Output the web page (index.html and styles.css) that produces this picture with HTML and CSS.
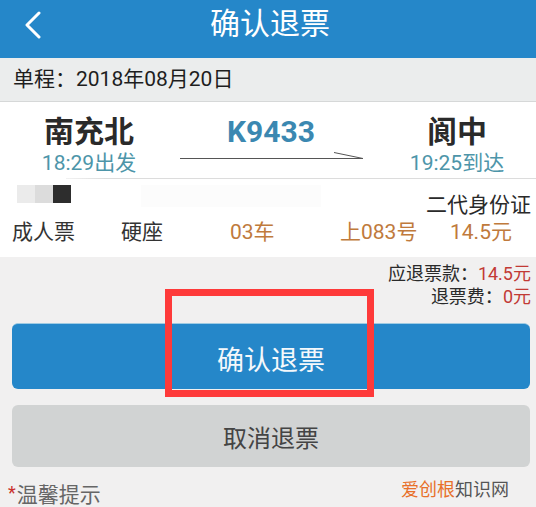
FILE: index.html
```html
<!DOCTYPE html>
<html lang="zh-CN">
<head>
  <meta charset="UTF-8">
  <meta name="viewport" content="width=device-width, initial-scale=1">
  <title>确认退票</title>
  <link rel="stylesheet" href="styles.css">
</head>
<body>
  <div class="page">
    <div class="top-bar">
      <div class="back">
        <svg width="20" height="30" viewBox="0 0 20 30">
          <polyline points="15,2 3,14 15,26" fill="none" stroke="#fff" stroke-width="3" stroke-linecap="round" stroke-linejoin="round"/>
        </svg>
      </div>
      <div class="top-title">确认退票</div>
      <div></div>
    </div>

    <div class="trip-date">单程：2018年08月20日</div>

    <div class="ticket">
      <div class="route">
        <div class="station">
          <div class="station-name">南充北</div>
          <div class="station-time">18:29出发</div>
        </div>
        <div class="train">
          <div class="train-no">K9433</div>
          <div class="train-arrow">
            <svg width="184" height="10" viewBox="0 0 184 10">
              <line x1="0" y1="8.5" x2="183" y2="8.5" stroke="#555" stroke-width="1"/>
              <line x1="154" y1="2.5" x2="183" y2="8.5" stroke="#555" stroke-width="1"/>
            </svg>
          </div>
        </div>
        <div class="station">
          <div class="station-name">阆中</div>
          <div class="station-time">19:25到达</div>
        </div>
      </div>
      <div class="route-line"></div>

      <div class="passenger">
        <div class="passenger-top">
          <div class="name-mask">
            <span class="mask-a"></span><span class="mask-b"></span><span class="mask-c"></span>
          </div>
          <div class="id-mask"></div>
          <div class="id-type">二代身份证</div>
        </div>
        <div class="seat-row">
          <span>成人票</span>
          <span>硬座</span>
          <span class="orange">03车</span>
          <span class="orange">上083号</span>
          <span class="orange">14.5元</span>
        </div>
      </div>
    </div>

    <div class="amounts">
      <div>应退票款：<span class="red">14.5元</span></div>
      <div>退票费：<span class="red">0元</span></div>
    </div>

    <div class="actions">
      <button class="btn btn-confirm">确认退票</button>
      <button class="btn btn-cancel">取消退票</button>
    </div>

    <div class="tips">
      <div class="tips-title"><span class="star">*</span>温馨提示</div>
      <div class="watermark"><span class="wm-orange">爱创根</span>知识网</div>
    </div>

    <div class="highlight"></div>
  </div>
</body>
</html>
```

FILE: styles.css
```css
body {
  margin: 0;
  padding: 0;
  background-color: #f1f0f0;
  font-family: Roboto, "Noto Sans CJK SC", sans-serif;
  color: #222;
}
.page {
  position: relative;
  width: 536px;
  height: 507px;
  overflow: hidden;
}
.top-bar {
  height: 58px;
  background-color: #2587c9;
  display: grid;
  grid-template-columns: 60px 1fr 60px;
  align-items: center;
}
.back {
  padding-left: 24px;
  padding-bottom: 6px;
  display: flex;
}
.top-title {
  text-align: center;
  color: #fff;
  font-size: 30px;
  line-height: 36px;
  padding-bottom: 10px;
  padding-left: 4px;
}
.trip-date {
  height: 43px;
  line-height: 43px;
  background-color: #ebeded;
  border-bottom: 1px solid #d6d8d8;
  padding-left: 13px;
  font-size: 21px;
  color: #1e1e1e;
}
.ticket {
  background-color: #fff;
  padding-bottom: 12px;
}
.route {
  display: grid;
  grid-template-columns: 178px 1fr 178px;
  padding-top: 12px;
  padding-bottom: 2px;
}
.route-line {
  height: 1px;
  margin-left: 66px;
  background: linear-gradient(to right, #f2f2f2, #dcdcdc 40px);
}
.station {
  text-align: center;
}
.station-name {
  font-size: 30px;
  font-weight: bold;
  line-height: 36px;
  color: #2a2a2a;
}
.station-time {
  font-size: 21px;
  line-height: 26px;
  color: #4d95a9;
}
.route .station:last-child {
  padding-left: 8px;
}
.train {
  display: flex;
  flex-direction: column;
  align-items: center;
}
.train-no {
  font-size: 30px;
  font-weight: bold;
  line-height: 36px;
  color: #3b88b1;
}
.train-arrow {
  display: flex;
  padding-left: 2px;
}
.passenger {
  padding: 6px 5px 0 12px;
}
.passenger-top {
  display: flex;
  justify-content: space-between;
  height: 34px;
}
.name-mask {
  display: flex;
  margin-left: 5px;
  height: 18px;
}
.name-mask span {
  width: 18px;
  height: 18px;
}
.mask-a {
  background-color: #ebebeb;
}
.mask-b {
  background-color: #dcdcdc;
}
.mask-c {
  background-color: #2d2d2d;
}
.id-mask {
  width: 180px;
  height: 22px;
  margin-left: 70px;
  background-color: #fcfcfc;
  flex: none;
}
.id-type {
  margin-left: auto;
  font-size: 21px;
  line-height: 24px;
  padding-top: 8px;
  color: #2a2a2a;
}
.seat-row {
  display: grid;
  grid-template-columns: 109px 109px 110px 110px auto;
  font-size: 21px;
  line-height: 26px;
  color: #333;
}
.orange {
  color: #c07a3c;
}
.amounts {
  text-align: right;
  padding: 5px 5px 0 0;
  font-size: 18px;
  line-height: 23px;
  color: #2a2a2a;
}
.red {
  color: #c23a35;
}
.actions {
  display: flex;
  flex-direction: column;
  gap: 16px;
  padding: 15px 6px 0 12px;
}
.btn {
  border: none;
  border-radius: 6px;
  font-family: Roboto, "Noto Sans CJK SC", sans-serif;
  cursor: pointer;
}
.btn-confirm {
  height: 66px;
  background-color: #2587c9;
  border-top: 1px solid #9fcbe3;
  color: #f4f8fb;
  font-size: 27px;
  padding-top: 4px;
}
.btn-cancel {
  height: 62px;
  background-color: #d1d3d3;
  color: #444;
  font-size: 24px;
}
.tips {
  display: flex;
  justify-content: space-between;
  align-items: center;
  padding: 12px 27px 0 8px;
}
.tips-title {
  font-size: 21px;
  line-height: 26px;
  color: #666;
}
.star {
  color: #c9302c;
  font-size: 18px;
  vertical-align: 3px;
  margin-right: 1px;
}
.watermark {
  font-size: 18px;
  line-height: 22px;
  color: #555;
  padding-bottom: 8px;
}
.wm-orange {
  color: #e8702a;
}
.highlight {
  position: absolute;
  left: 165px;
  top: 289px;
  width: 209px;
  height: 108px;
  border: 7px solid #fe3a3a;
  box-sizing: border-box;
}
```
